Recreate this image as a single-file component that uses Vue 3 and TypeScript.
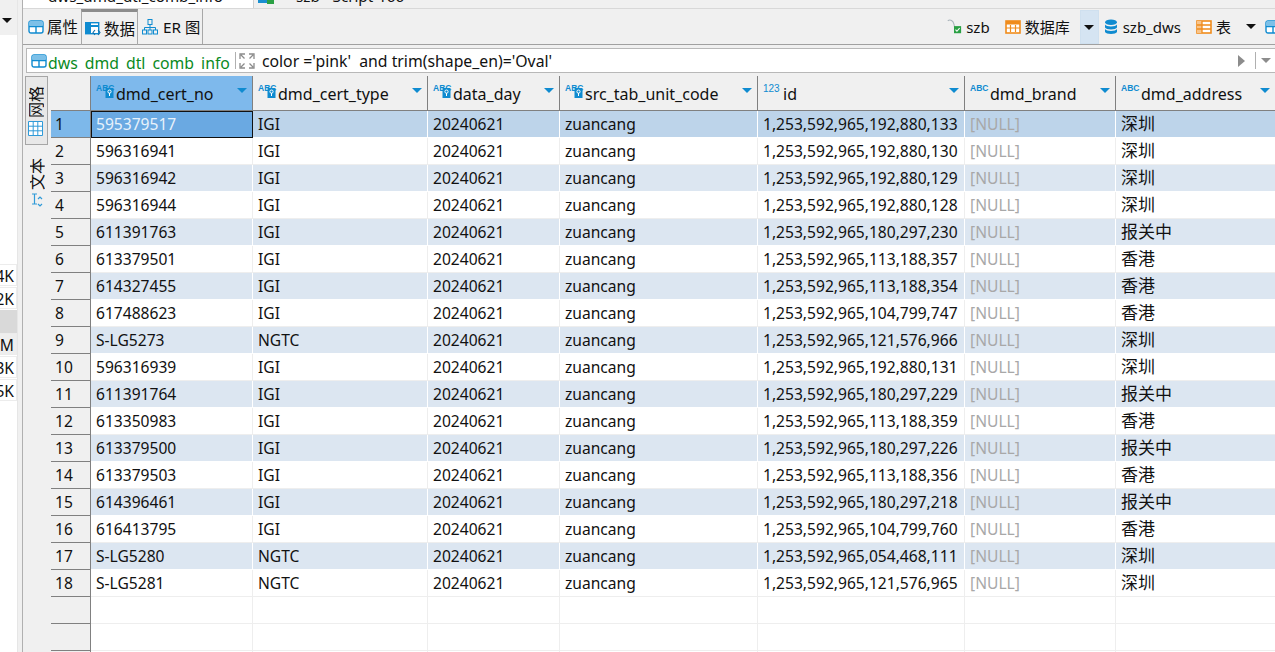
<script setup lang="ts">
interface Col { name: string; icon: 'key' | 'abc' | 'num' }
const cols: Col[] = [
  { name: 'dmd_cert_no', icon: 'key' },
  { name: 'dmd_cert_type', icon: 'key' },
  { name: 'data_day', icon: 'key' },
  { name: 'src_tab_unit_code', icon: 'key' },
  { name: 'id', icon: 'num' },
  { name: 'dmd_brand', icon: 'abc' },
  { name: 'dmd_address', icon: 'abc' },
]
const raw: string[][] = [
  ['595379517', 'IGI', '192,880,133', '深圳'],
  ['596316941', 'IGI', '192,880,130', '深圳'],
  ['596316942', 'IGI', '192,880,129', '深圳'],
  ['596316944', 'IGI', '192,880,128', '深圳'],
  ['611391763', 'IGI', '180,297,230', '报关中'],
  ['613379501', 'IGI', '113,188,357', '香港'],
  ['614327455', 'IGI', '113,188,354', '香港'],
  ['617488623', 'IGI', '104,799,747', '香港'],
  ['S-LG5273', 'NGTC', '121,576,966', '深圳'],
  ['596316939', 'IGI', '192,880,131', '深圳'],
  ['611391764', 'IGI', '180,297,229', '报关中'],
  ['613350983', 'IGI', '113,188,359', '香港'],
  ['613379500', 'IGI', '180,297,226', '报关中'],
  ['613379503', 'IGI', '113,188,356', '香港'],
  ['614396461', 'IGI', '180,297,218', '报关中'],
  ['616413795', 'IGI', '104,799,760', '香港'],
  ['S-LG5280', 'NGTC', '054,468,111', '深圳'],
  ['S-LG5281', 'NGTC', '121,576,965', '深圳'],
]
const rows = raw.map((r) => [r[0], r[1], '20240621', 'zuancang', '1,253,592,965,' + r[2], '[NULL]', r[3]])
const sizes = ['4K', '2K', '', 'M', '3K', '5K']
</script>

<template>
  <div class="app">
    <aside class="side">
      <div class="side-top"><span class="tri"></span></div>
      <div class="side-list">
        <div v-for="(s, i) in sizes" :key="i" class="size" :class="{ blank: !s, dim: s === 'M' }">{{ s }}</div>
      </div>
    </aside>
    <main class="main">
      <div class="editor-tabs">
        <div class="etab on"><span>dws_dmd_dtl_comb_info</span></div>
        <div class="etab other">
          <svg class="strip-ico" viewBox="0 0 16 4"><rect x="0" y="0" width="11" height="3" fill="#1a8fd0" /><rect x="9" y="0" width="7" height="4" fill="#2aa044" /></svg>
          <span>szb - Script-166</span>
        </div>
      </div>
      <div class="toolbar">
        <div class="vtab">
          <svg class="ico16" viewBox="0 0 16 14"><rect x="1" y="1" width="14" height="12" rx="2" fill="#fff" stroke="#0f8bd0" stroke-width="1.4" /><path d="M1 6.5h14M8 6.5V13" stroke="#0f8bd0" stroke-width="1.4" /><rect x="1" y="1" width="14" height="5" rx="1.5" fill="#7cc0e8" /></svg>
          <span>属性</span>
        </div>
        <div class="vtab active">
          <svg class="ico16" viewBox="0 0 16 14"><rect x="0.7" y="0.7" width="13" height="11" fill="#fff" stroke="#0f8bd0" stroke-width="1.4" /><rect x="1" y="1" width="5" height="10" fill="#0f8bd0" /><path d="M1 4h13" stroke="#0f8bd0" stroke-width="2" /><path d="M10 8l-2 2.5 2 2.5M13 8l2 2.5-2 2.5" fill="none" stroke="#0f6ea8" stroke-width="1.1" /></svg>
          <span>数据</span>
        </div>
        <div class="vtab er">
          <svg class="ico16 tall" viewBox="0 0 16 16"><rect x="6" y="0.5" width="4" height="5" fill="none" stroke="#0f8bd0" /><rect x="0.5" y="11" width="4" height="4" fill="none" stroke="#0f8bd0" /><rect x="6" y="11" width="4" height="4" fill="none" stroke="#0f8bd0" /><rect x="11.5" y="11" width="4" height="4" fill="none" stroke="#0f8bd0" /><path d="M8 5.5V11M2.5 11V8.5h11V11" fill="none" stroke="#0f8bd0" /></svg>
          <span>ER 图</span>
        </div>
        <div class="spacer"></div>
        <div class="tool">
          <svg class="ico16 tall" viewBox="0 0 16 18"><path d="M1 2c3-2 6 0 7 4s1 5 1 7" fill="none" stroke="#a9b4bb" stroke-width="1.2" /><rect x="8" y="8" width="8" height="8" fill="#2aa044" /><path d="M9.7 12l1.6 1.8 3-3.5" fill="none" stroke="#fff" stroke-width="1.2" /></svg>
          <span>szb</span>
        </div>
        <div class="tool">
          <svg class="ico16" viewBox="0 0 16 14"><rect x="1" y="1" width="14" height="12" fill="#fff" stroke="#f08c1c" stroke-width="1.6" /><rect x="1" y="1" width="14" height="3.5" fill="#f08c1c" /><path d="M5.5 5v7M10.5 5v7M1 8h14" stroke="#f08c1c" stroke-width="1.2" /></svg>
          <span>数据库</span>
        </div>
        <div class="drop"><span class="tri"></span></div>
        <div class="tool tight">
          <svg class="ico16 tall" viewBox="0 0 14 16"><ellipse cx="7" cy="3.2" rx="6" ry="2.8" fill="#0f8bd0" /><path d="M1 5.5c1 2.6 11 2.6 12 0v3c-1 2.6-11 2.6-12 0z" fill="#0f8bd0" /><path d="M1 10c1 2.6 11 2.6 12 0v3c-1 2.6-11 2.6-12 0z" fill="#0f8bd0" /></svg>
          <span>szb_dws</span>
        </div>
        <div class="tool">
          <svg class="ico16" viewBox="0 0 16 14"><rect x="1" y="1" width="14" height="12" fill="#fff" stroke="#f08c1c" stroke-width="1.6" /><rect x="1" y="1" width="5" height="12" fill="#f8c48a" /><path d="M1 5h14M1 9h14M6 1v12" stroke="#f08c1c" stroke-width="1.3" /></svg>
          <span>表</span>
        </div>
        <span class="tri tool-tri"></span>
        <svg class="ico16 last" viewBox="0 0 16 14"><rect x="1" y="1" width="14" height="12" rx="2" fill="#fff" stroke="#0f8bd0" stroke-width="1.4" /><path d="M1 6.5h14M8 6.5V13" stroke="#0f8bd0" stroke-width="1.4" /><rect x="1" y="1" width="14" height="5" rx="1.5" fill="#7cc0e8" /></svg>
      </div>
      <div class="filter">
        <svg class="ico16" viewBox="0 0 16 14"><rect x="1" y="1" width="14" height="12" rx="2" fill="#fff" stroke="#0f8bd0" stroke-width="1.4" /><path d="M1 6.5h14M8 6.5V13" stroke="#0f8bd0" stroke-width="1.4" /><rect x="1" y="1" width="14" height="5" rx="1.5" fill="#7cc0e8" /></svg>
        <span class="tname">dws_dmd_dtl_comb_info</span>
        <span class="fsep"></span>
        <svg class="expand" viewBox="0 0 16 16"><path d="M1 6V1h5M2 2l3.5 3.5M10 1h5v5M14 2l-3.5 3.5M1 10v5h5M2 14l3.5-3.5M15 10v5h-5M14 14l-3.5-3.5" fill="none" stroke="#8b8b8b" stroke-width="1.3" /></svg>
        <span class="expr">color ='pink'&nbsp; and trim(shape_en)='Oval'</span>
        <span class="spacer"></span>
        <span class="play"></span>
        <span class="fsep wide"></span>
        <span class="gtri"></span>
      </div>
      <div class="body">
        <div class="rail">
          <div class="rail-btn">
            <span class="rot">网格</span>
            <svg class="railgrid" viewBox="0 0 15 15"><path d="M.5.5h14v14H.5zM.5 5.2h14M.5 9.8h14M5.2.5v14M9.8.5v14" fill="#fff" stroke="#2f9ad8" /></svg>
          </div>
          <div class="rail-text">
            <span class="rot">文本</span>
            <svg class="railtext" viewBox="0 0 12 16"><path d="M1 1h5M1 11h5M3.5 1v10" fill="none" stroke="#2f9ad8" stroke-width="1.2" /><path d="M7 6l2-2 2 2M7 11l2 2 2-2" fill="none" stroke="#2f9ad8" stroke-width="1.2" /></svg>
          </div>
        </div>
        <div class="grid">
          <div class="row head">
            <div class="rh corner"></div>
            <div v-for="(c, i) in cols" :key="c.name" class="hc" :class="{ sel: i === 0 }">
              <span class="type" :class="c.icon">
                <template v-if="c.icon === 'num'">123</template>
                <template v-else>ABC</template>
                <svg v-if="c.icon === 'key'" class="keybox" viewBox="0 0 8 10"><rect width="8" height="10" fill="#0f8bd0" /><circle cx="4" cy="3.6" r="1.6" fill="none" stroke="#fff" /><path d="M4 5v3" stroke="#fff" /></svg>
              </span>
              <span class="hname">{{ c.name }}</span>
              <span class="sort"></span>
            </div>
          </div>
          <div v-for="(r, i) in rows" :key="i" class="row" :class="{ odd: i % 2 === 0, cur: i === 0 }">
            <div class="rh" :class="{ sel: i === 0 }">{{ i + 1 }}</div>
            <div v-for="(v, j) in r" :key="j" class="cell" :class="{ focus: i === 0 && j === 0, nul: j === 5, cjk: j === 6 }">{{ v }}</div>
          </div>
          <div v-for="n in 3" :key="'e' + n" class="row">
            <div class="rh"></div>
            <div v-for="j in 7" :key="j" class="cell"></div>
          </div>
        </div>
      </div>
    </main>
  </div>
</template>

<style>
html, body { margin: 0; background: #f0f0f0; overflow: hidden; }
</style>

<style scoped>
.app {
  width: 1275px;
  height: 652px;
  display: flex;
  overflow: hidden;
  background: #f0f0f0;
  color: #111;
  font: 15.6px/20px "Noto Sans", "Noto Sans CJK SC", sans-serif;
}
.side { width: 17px; flex: none; background: #fff; margin-right: 4px; border-right: 1px solid #e6e6e6; box-sizing: content-box; }
.side-top { height: 35px; background: #f0f0f0; display: flex; justify-content: flex-end; padding: 18px 5px 0 0; box-sizing: border-box; }
.tri { width: 0; height: 0; border-left: 5px solid transparent; border-right: 5px solid transparent; border-top: 5px solid #111; flex: none; }
.side-list { margin-top: 229px; display: flex; flex-direction: column; }
.size { height: 22px; line-height: 22px; margin-bottom: 1px; border: 1px solid #ececec; border-left: 0; box-sizing: border-box; display: flex; justify-content: flex-end; padding-right: 2px; overflow: hidden; }
.size.blank { background: #d9d9d9; border: 0; height: 23px; margin-bottom: 0; }
.size.dim { background: #eeeeee; }
.main { flex: 1; min-width: 0; border-left: 1px solid #b0b0b0; display: flex; flex-direction: column; overflow: hidden; }
.ico16 { width: 16px; height: 14px; flex: none; }
.ico16.tall { height: 16px; }
.strip-ico { width: 16px; height: 4px; flex: none; }
.editor-tabs { height: 9px; flex: none; display: flex; border-bottom: 1px solid #d8d8d8; box-sizing: border-box; overflow: hidden; }
.etab { width: 231px; background: #fff; padding-left: 25px; box-sizing: border-box; height: 9px; font-size: 15.2px; }
.etab span { display: block; margin-top: -14px; white-space: nowrap; }
.etab.on { border-right: 1px solid #cfcfcf; }
.etab.other { background: none; display: flex; gap: 22px; padding-left: 4px; width: 300px; }
.toolbar { height: 36px; flex: none; display: flex; align-items: stretch; border-bottom: 1px solid #a0a0a0; box-sizing: border-box; }
.vtab { display: flex; align-items: center; gap: 3px; padding: 0 0 0 5px; box-sizing: border-box; width: 58px; font-size: 15.5px; white-space: nowrap; flex: none; }
.vtab.active { width: 57px; border: 1px solid #a8a8a8; border-top: 3px solid #8c8c8c; border-bottom: 0; margin-bottom: -1px; gap: 3px; padding: 0 0 0 3px; }
.vtab.er { width: 65px; border-right: 1px solid #a8a8a8; gap: 5px; padding-left: 4px; font-size: 15.3px; }
.spacer { flex: 1; }
.tool { display: flex; align-items: center; gap: 4px; font-size: 15px; margin-right: 15px; }
.tool.tight { margin-right: 15px; gap: 4px; }
.drop { width: 19px; background: #d5e4f2; border: 1px solid #cfe0ef; box-sizing: border-box; display: flex; align-items: center; justify-content: center; margin: 1px 4px 0 -5px; }
.tool-tri { align-self: center; margin-right: 9px; }
.last { align-self: center; margin-right: -6px; }
.filter { height: 25px; flex: none; margin: 3px 0 3px 3px; background: #fff; border: 1px solid #b8b8b8; border-right: 0; box-sizing: border-box; display: flex; align-items: center; padding-left: 4px; }
.tname { color: #0a8a1e; height: 18px; overflow: hidden; line-height: 22px; margin-left: 1px; font-size: 15.8px; }
.fsep { width: 1px; height: 17px; background: #b0b0b0; margin: 0 3px 0 5px; }
.fsep.wide { margin: 0 5px 0 10px; }
.expand { width: 16px; height: 16px; flex: none; }
.expr { margin-left: 7px; font-size: 15.8px; }
.play { width: 0; height: 0; border-left: 7px solid #8c8c8c; border-top: 6px solid transparent; border-bottom: 6px solid transparent; }
.gtri { width: 0; height: 0; border-left: 5px solid transparent; border-right: 5px solid transparent; border-top: 5px solid #8c8c8c; margin-right: 4px; }
.body { flex: 1; min-height: 0; display: flex; }
.rail { width: 28px; flex: none; padding: 0 3px 0 2px; box-sizing: border-box; }
.rail-btn { height: 69px; background: #e8e8e8; border: 1px solid #a6a6a6; box-sizing: border-box; display: flex; flex-direction: column; align-items: center; padding-top: 9px; }
.rot { writing-mode: vertical-rl; text-orientation: sideways; transform: rotate(180deg); font-size: 16px; line-height: 15px; width: 15px; overflow: hidden; flex: none; }
.railgrid { width: 15px; height: 15px; margin: 3px 2px 0 0; }
.rail-text { display: flex; flex-direction: column; align-items: center; padding: 13px 0 0 1px; }
.railtext { width: 12px; height: 16px; margin-top: 3px; }
.grid { flex: 1; min-width: 0; }
.row { display: grid; grid-template-columns: 40px 162px 175px 132px 198px 207px 151px 160px; height: 27px; }
.row.head { height: 35px; border-bottom: 1px solid #808080; box-sizing: border-box; }
.rh { background: #f0f0f0; border-right: 1px solid #808080; border-bottom: 1px solid #808080; box-sizing: border-box; padding-left: 4px; line-height: 26px; }
.rh.corner { border-bottom: 0; }
.rh.sel { background: #7db8ea; }
.hc { background: #f0f0f0; border-right: 1px solid #808080; box-sizing: border-box; display: flex; align-items: flex-start; padding: 7px 0 0 5px; overflow: hidden; }
.hc.sel { background: #7eb9ec; }
.type { font: 700 8.5px/9px "Liberation Sans", sans-serif; color: #0f8bd0; letter-spacing: 0; flex: none; display: flex; width: 20px; height: 14px; margin-top: 1px; position: relative; }
.type.num { font-weight: 400; font-size: 10px; }
.keybox { position: absolute; left: 9px; top: 4px; width: 9px; height: 10px; }
.hname { margin-top: 1px; line-height: 20px; font-size: 16px; white-space: nowrap; flex: 1; }
.sort { width: 0; height: 0; border-left: 5px solid transparent; border-right: 5px solid transparent; border-top: 5px solid #0f8bd0; flex: none; margin: 5px 5px 0 0; }
.cell { box-sizing: border-box; padding-left: 5px; line-height: 26px; background: #fff; border-right: 1px solid #eeeeee; border-bottom: 1px solid #eeeeee; white-space: nowrap; overflow: hidden; }
.cell.cjk { font-size: 17px; }
.odd .cell { background: #dce6f1; border-color: #fff; }
.cur .cell { background: #bdd4ea; }
.cell.focus { background: #6aa9e2; color: #e8f2fb; border: 1px solid #111; line-height: 24px; padding-left: 4px; }
.cell.nul { color: #a8a8a8; }
</style>
